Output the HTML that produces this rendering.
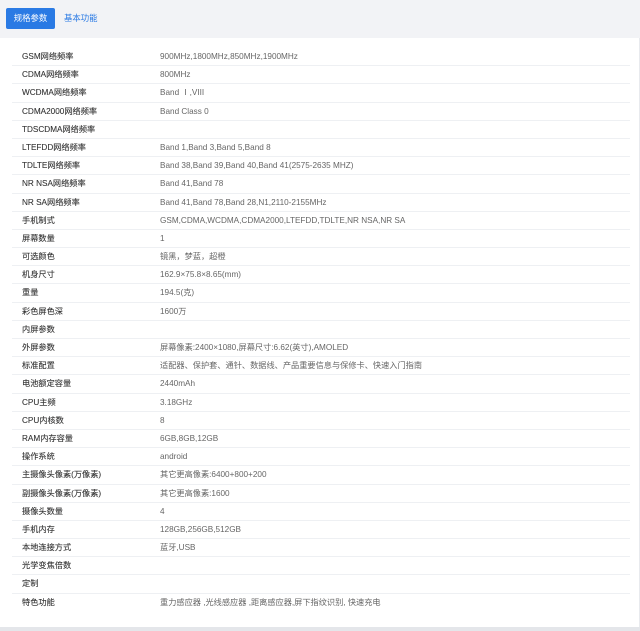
<!DOCTYPE html><html><head><meta charset="utf-8"><style>
body{margin:0;width:640px;height:631px;background:#fff;font-family:"Liberation Sans","Noto Sans CJK SC",sans-serif;overflow:hidden;position:relative}
.hd{position:absolute;left:0;top:0;width:640px;height:38px;background:#f2f3f6}
.btn{position:absolute;left:6px;top:8px;width:49px;height:21px;background:#2a7ae4;border-radius:2px;color:#fff;font-size:8.4px;line-height:21px;text-align:center}
.t2{position:absolute;left:64px;top:8px;line-height:21px;font-size:8.4px;color:#2a7ae4}
.tb{position:absolute;left:12px;top:48px;width:618px}
.r{height:18.2px;border-bottom:1px solid #eef0f3;box-sizing:border-box;font-size:8.2px;line-height:18px;position:relative}
.r b{position:absolute;left:10px;font-weight:normal;color:#333;-webkit-text-stroke:0.1px #333}
.r i{position:absolute;left:148px;font-style:normal;color:#666}
.bt{position:absolute;left:0;top:627px;width:640px;height:4px;background:#e4e6ea}
.rt{position:absolute;right:0;top:38px;width:1px;height:590px;background:#e8eaee}
</style></head><body>
<div class="hd"><div class="btn">规格参数</div><div class="t2">基本功能</div></div>
<div class="tb">
<div class="r"><b>GSM网络频率</b><i>900MHz,1800MHz,850MHz,1900MHz</i></div>
<div class="r"><b>CDMA网络频率</b><i>800MHz</i></div>
<div class="r"><b>WCDMA网络频率</b><i>Band Ⅰ,VIII</i></div>
<div class="r"><b>CDMA2000网络频率</b><i>Band Class 0</i></div>
<div class="r"><b>TDSCDMA网络频率</b><i></i></div>
<div class="r"><b>LTEFDD网络频率</b><i>Band 1,Band 3,Band 5,Band 8</i></div>
<div class="r"><b>TDLTE网络频率</b><i>Band 38,Band 39,Band 40,Band 41(2575-2635 MHZ)</i></div>
<div class="r"><b>NR NSA网络频率</b><i>Band 41,Band 78</i></div>
<div class="r"><b>NR SA网络频率</b><i>Band 41,Band 78,Band 28,N1,2110-2155MHz</i></div>
<div class="r"><b>手机制式</b><i>GSM,CDMA,WCDMA,CDMA2000,LTEFDD,TDLTE,NR NSA,NR SA</i></div>
<div class="r"><b>屏幕数量</b><i>1</i></div>
<div class="r"><b>可选颜色</b><i>镜黑，梦蓝，超橙</i></div>
<div class="r"><b>机身尺寸</b><i>162.9×75.8×8.65(mm)</i></div>
<div class="r"><b>重量</b><i>194.5(克)</i></div>
<div class="r"><b>彩色屏色深</b><i>1600万</i></div>
<div class="r"><b>内屏参数</b><i></i></div>
<div class="r"><b>外屏参数</b><i>屏幕像素:2400×1080,屏幕尺寸:6.62(英寸),AMOLED</i></div>
<div class="r"><b>标准配置</b><i>适配器、保护套、通针、数据线、产品重要信息与保修卡、快速入门指南</i></div>
<div class="r"><b>电池额定容量</b><i>2440mAh</i></div>
<div class="r"><b>CPU主频</b><i>3.18GHz</i></div>
<div class="r"><b>CPU内核数</b><i>8</i></div>
<div class="r"><b>RAM内存容量</b><i>6GB,8GB,12GB</i></div>
<div class="r"><b>操作系统</b><i>android</i></div>
<div class="r"><b>主摄像头像素(万像素)</b><i>其它更高像素:6400+800+200</i></div>
<div class="r"><b>副摄像头像素(万像素)</b><i>其它更高像素:1600</i></div>
<div class="r"><b>摄像头数量</b><i>4</i></div>
<div class="r"><b>手机内存</b><i>128GB,256GB,512GB</i></div>
<div class="r"><b>本地连接方式</b><i>蓝牙,USB</i></div>
<div class="r"><b>光学变焦倍数</b><i></i></div>
<div class="r"><b>定制</b><i></i></div>
<div class="r" style="border:none"><b>特色功能</b><i>重力感应器 ,光线感应器 ,距离感应器,屏下指纹识别, 快速充电</i></div>
</div>
<div class="rt"></div><div class="bt"></div>
</body></html>
